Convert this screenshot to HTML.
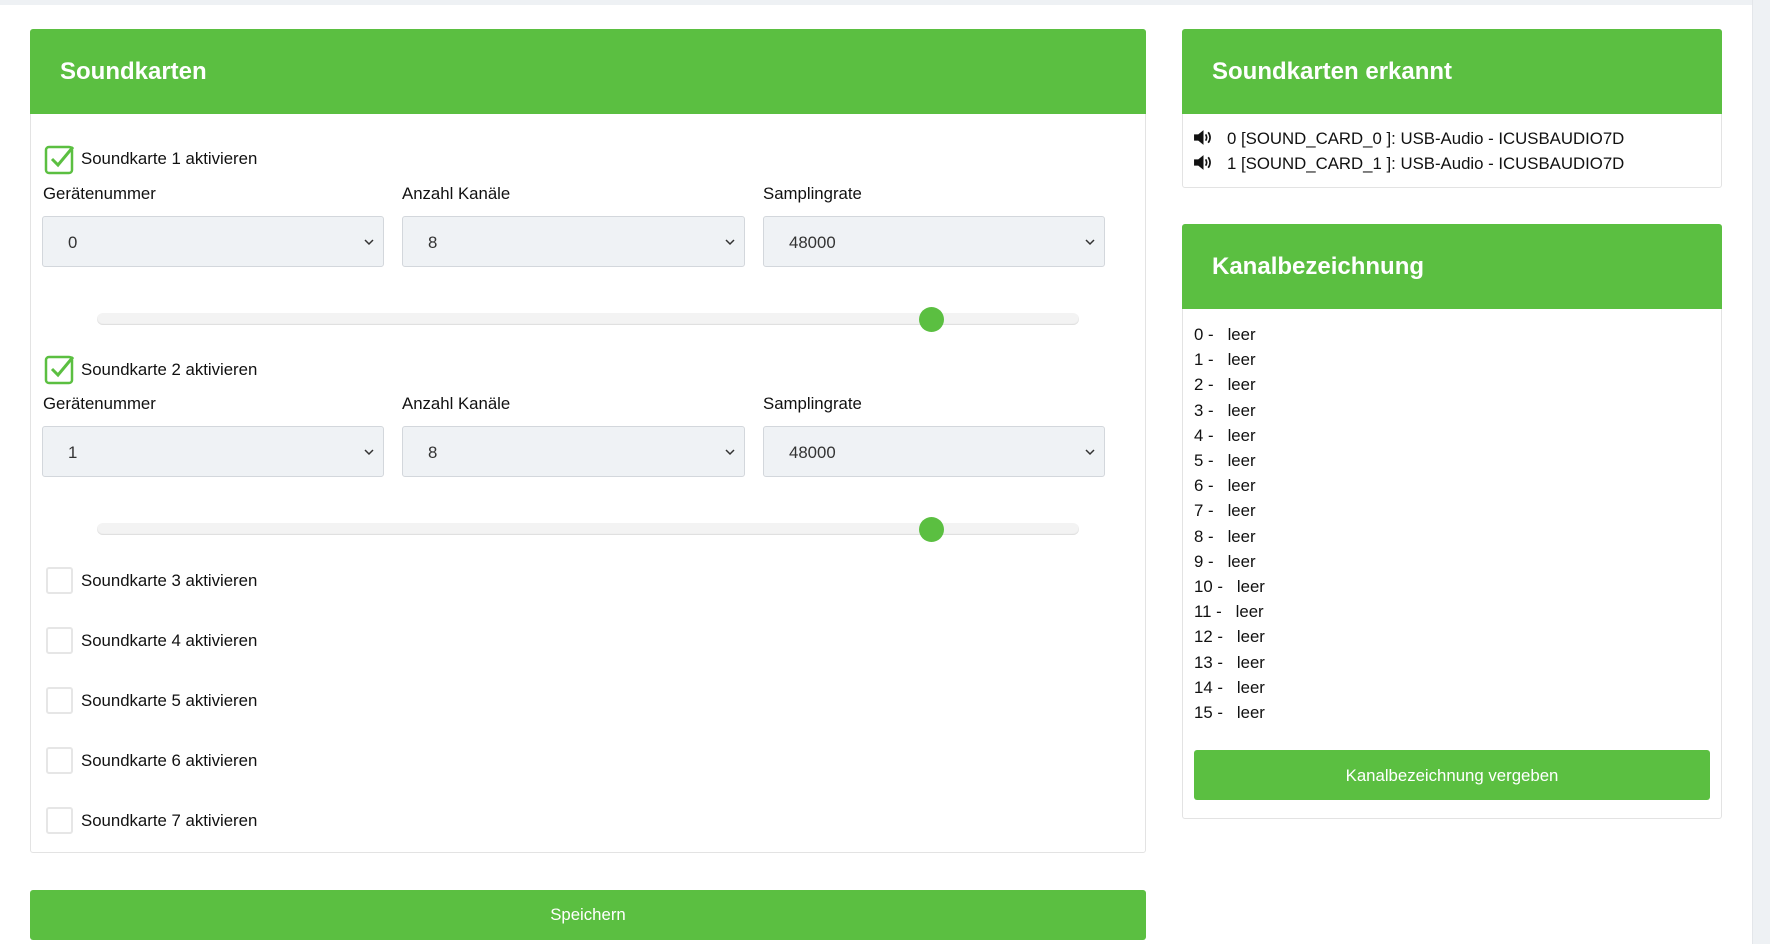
<!DOCTYPE html>
<html><head><meta charset="utf-8"><style>
*{box-sizing:border-box;margin:0;padding:0}
body{width:1770px;height:944px;background:#fff;font-family:"Liberation Sans",Arial,sans-serif;color:#111;position:relative;overflow:hidden;font-size:16.8px}
.topbar{position:absolute;left:0;top:0;width:1770px;height:5px;background:#eef1f4}
.rightbar{position:absolute;left:1752px;top:0;width:18px;height:944px;background:#eef1f4;border-left:1px solid #e3e6ea}
.panel{position:absolute;border:1px solid #e3e3e3;border-radius:3px;background:#fff}
.hdr{position:absolute;left:-1px;right:-1px;top:-1px;height:85px;background:#5bbf41;border-radius:3px 3px 0 0;color:#fff;font-weight:bold;font-size:24px;padding-left:30px;line-height:85px}
.abs{position:absolute;white-space:nowrap}
.sel{position:absolute;height:51px;background:#eff2f5;border:1px solid #d3d7dc;border-radius:3px;padding-left:25px;line-height:51px;color:#333}
.sel svg{position:absolute;right:8px;top:21px}
.track{position:absolute;left:97px;width:982px;height:12px;border-radius:6px;background:#f3f3f3;box-shadow:inset 0 -1px 1px #ddd}
.thumb{position:absolute;width:25px;height:25px;border-radius:50%;background:#5bbf41}
.cb{position:absolute;left:46px;width:27px;height:27px;border:2px solid #e6e6e6;border-radius:3px;background:#fff}
.btn{position:absolute;background:#5bbf41;color:#fff;text-align:center;border-radius:3px}
</style></head><body>
<div class="topbar"></div>
<div class="rightbar"></div>

<div class="panel" style="left:30px;top:29px;width:1116px;height:824px">
<div class="hdr">Soundkarten</div>
</div>

<svg class="abs" style="left:44px;top:143px" width="32" height="32" viewBox="0 0 32 32"><rect x="2" y="4" width="26" height="26" rx="3" fill="none" stroke="#5bbf41" stroke-width="2.5"/><path d="M8 16 L14 22 L29 4" fill="none" stroke="#5bbf41" stroke-width="3"/></svg>
<div class="abs" style="left:81px;top:149px">Soundkarte 1 aktivieren</div>
<div class="abs" style="left:43px;top:184px">Gerätenummer</div>
<div class="abs" style="left:402px;top:184px">Anzahl Kanäle</div>
<div class="abs" style="left:763px;top:184px">Samplingrate</div>
<div class="sel" style="left:42px;top:216px;width:342px">0<svg width="12" height="8"><path d="M2 2l4 4 4-4" fill="none" stroke="#333" stroke-width="1.5"/></svg></div>
<div class="sel" style="left:402px;top:216px;width:343px">8<svg width="12" height="8"><path d="M2 2l4 4 4-4" fill="none" stroke="#333" stroke-width="1.5"/></svg></div>
<div class="sel" style="left:763px;top:216px;width:342px">48000<svg width="12" height="8"><path d="M2 2l4 4 4-4" fill="none" stroke="#333" stroke-width="1.5"/></svg></div>
<div class="track" style="top:313px"></div>
<div class="thumb" style="left:919px;top:307px"></div>

<svg class="abs" style="left:44px;top:353px" width="32" height="32" viewBox="0 0 32 32"><rect x="2" y="4" width="26" height="26" rx="3" fill="none" stroke="#5bbf41" stroke-width="2.5"/><path d="M8 16 L14 22 L29 4" fill="none" stroke="#5bbf41" stroke-width="3"/></svg>
<div class="abs" style="left:81px;top:360px">Soundkarte 2 aktivieren</div>
<div class="abs" style="left:43px;top:394px">Gerätenummer</div>
<div class="abs" style="left:402px;top:394px">Anzahl Kanäle</div>
<div class="abs" style="left:763px;top:394px">Samplingrate</div>
<div class="sel" style="left:42px;top:426px;width:342px">1<svg width="12" height="8"><path d="M2 2l4 4 4-4" fill="none" stroke="#333" stroke-width="1.5"/></svg></div>
<div class="sel" style="left:402px;top:426px;width:343px">8<svg width="12" height="8"><path d="M2 2l4 4 4-4" fill="none" stroke="#333" stroke-width="1.5"/></svg></div>
<div class="sel" style="left:763px;top:426px;width:342px">48000<svg width="12" height="8"><path d="M2 2l4 4 4-4" fill="none" stroke="#333" stroke-width="1.5"/></svg></div>
<div class="track" style="top:523px"></div>
<div class="thumb" style="left:919px;top:517px"></div>

<div class="cb" style="top:567px"></div><div class="abs" style="left:81px;top:571px">Soundkarte 3 aktivieren</div>
<div class="cb" style="top:627px"></div><div class="abs" style="left:81px;top:631px">Soundkarte 4 aktivieren</div>
<div class="cb" style="top:687px"></div><div class="abs" style="left:81px;top:691px">Soundkarte 5 aktivieren</div>
<div class="cb" style="top:747px"></div><div class="abs" style="left:81px;top:751px">Soundkarte 6 aktivieren</div>
<div class="cb" style="top:807px"></div><div class="abs" style="left:81px;top:811px">Soundkarte 7 aktivieren</div>

<div class="btn" style="left:30px;top:890px;width:1116px;height:50px;line-height:50px">Speichern</div>

<div class="panel" style="left:1182px;top:29px;width:540px;height:159px">
<div class="hdr">Soundkarten erkannt</div>
</div>
<svg class="abs" style="left:1193px;top:129px" width="21" height="17" viewBox="0 0 20 16"><path d="M1 5h4l5-4v14l-5-4H1z" fill="#111"/><path d="M12 5q2 3 0 6M14.5 3q3.5 5 0 10" fill="none" stroke="#111" stroke-width="1.6"/></svg>
<div class="abs" style="left:1227px;top:129px">0 [SOUND_CARD_0 ]: USB-Audio - ICUSBAUDIO7D</div>
<svg class="abs" style="left:1193px;top:154px" width="21" height="17" viewBox="0 0 20 16"><path d="M1 5h4l5-4v14l-5-4H1z" fill="#111"/><path d="M12 5q2 3 0 6M14.5 3q3.5 5 0 10" fill="none" stroke="#111" stroke-width="1.6"/></svg>
<div class="abs" style="left:1227px;top:154px">1 [SOUND_CARD_1 ]: USB-Audio - ICUSBAUDIO7D</div>

<div class="panel" style="left:1182px;top:224px;width:540px;height:595px">
<div class="hdr">Kanalbezeichnung</div>
</div>
<div class="abs" style="left:1194px;top:322px;line-height:25.2px">
0 -&nbsp;&nbsp; leer<br>1 -&nbsp;&nbsp; leer<br>2 -&nbsp;&nbsp; leer<br>3 -&nbsp;&nbsp; leer<br>4 -&nbsp;&nbsp; leer<br>5 -&nbsp;&nbsp; leer<br>6 -&nbsp;&nbsp; leer<br>7 -&nbsp;&nbsp; leer<br>8 -&nbsp;&nbsp; leer<br>9 -&nbsp;&nbsp; leer<br>10 -&nbsp;&nbsp; leer<br>11 -&nbsp;&nbsp; leer<br>12 -&nbsp;&nbsp; leer<br>13 -&nbsp;&nbsp; leer<br>14 -&nbsp;&nbsp; leer<br>15 -&nbsp;&nbsp; leer
</div>
<div class="btn" style="left:1194px;top:750px;width:516px;height:50px;line-height:51px">Kanalbezeichnung vergeben</div>
</body></html>
